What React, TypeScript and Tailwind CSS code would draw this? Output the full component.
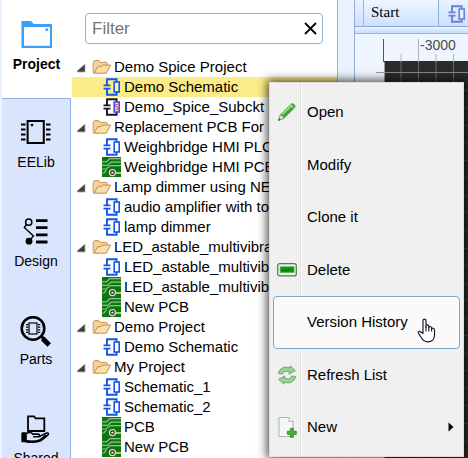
import React from "react";

type Kind = "folder" | "sch" | "sub" | "pcb";

const tree: { kind: Kind; label: string; active?: boolean }[] = [
  { kind: "folder", label: "Demo Spice Project" },
  { kind: "sch", label: "Demo Schematic", active: true },
  { kind: "sub", label: "Demo_Spice_Subckt" },
  { kind: "folder", label: "Replacement PCB For" },
  { kind: "sch", label: "Weighbridge HMI PLC" },
  { kind: "pcb", label: "Weighbridge HMI PCB" },
  { kind: "folder", label: "Lamp dimmer using NE555" },
  { kind: "sch", label: "audio amplifier with tone" },
  { kind: "sch", label: "lamp dimmer" },
  { kind: "folder", label: "LED_astable_multivibrator" },
  { kind: "sch", label: "LED_astable_multivibrator" },
  { kind: "pcb", label: "LED_astable_multivibrator" },
  { kind: "pcb", label: "New PCB" },
  { kind: "folder", label: "Demo Project" },
  { kind: "sch", label: "Demo Schematic" },
  { kind: "folder", label: "My Project" },
  { kind: "sch", label: "Schematic_1" },
  { kind: "sch", label: "Schematic_2" },
  { kind: "pcb", label: "PCB" },
  { kind: "pcb", label: "New PCB" },
];

function SchIcon({ sub = false, color = "#1457e6" }: { sub?: boolean; color?: string }) {
  const main = sub ? "#161620" : color;
  return (
    <svg width="18" height="20" viewBox="0 0 18 20" fill="none" className="shrink-0">
      <path d="M4 8V2.2h9.6V5M4 12v5.8h9.6V15" stroke={main} strokeWidth="1.9" />
      <path d="M.5 8.3h7M.5 11.7h7" stroke={main} strokeWidth="1.7" />
      <rect x="11.2" y="5" width="5" height="10" fill={sub ? "#f9d5dc" : "#fff"} fillOpacity={sub ? 1 : 0.4} stroke={sub ? "#4a4ae8" : color} strokeWidth="1.6" />
      {sub && <path d="M15.2 7.4h-2.6v2.4h2.4v2.5h-2.6" stroke="#ee4a68" strokeWidth="1" />}
    </svg>
  );
}

function PcbIcon() {
  return (
    <svg width="19" height="20" viewBox="0 0 19 20" fill="none" className="shrink-0">
      <rect width="19" height="20" fill="#0c770e" />
      <path d="M0 4.8h4.5L8 1.6h11M0 8.4h5.5L9 5.2h10M0 12h4l4.5-3.4H19M0 16h2l2.5-3" stroke="#8cc48a" strokeWidth="1.2" />
      <path d="M12 16h7" stroke="#e6df9a" strokeWidth="1.5" />
      <circle cx="10.5" cy="15.6" r="3" fill="#111" stroke="#d9dcc0" strokeWidth="1.4" />
      <circle cx="10.5" cy="15.6" r="1.2" fill="#fff" />
    </svg>
  );
}

function FolderIcon() {
  return (
    <svg width="20" height="16" viewBox="0 0 20 16" className="shrink-0">
      <path d="M1.2 13.6V3.3L2.6 1.6h4.2l1.3 1.8h6.5l.8 1V8l-10 6z" fill="#f3d3a0" stroke="#c99257" />
      <path d="M2 14.2l3.6-6.4 3.6-.4 1.6-1.3h7.8L14.2 14.2z" fill="#fbdfa8" stroke="#c48c4d" strokeLinejoin="round" />
    </svg>
  );
}

function TreeRow({ kind, label, active }: { kind: Kind; label: string; active?: boolean }) {
  const folder = kind === "folder";
  return (
    <div className={`ml-px flex h-5 shrink-0 items-center whitespace-nowrap ${active ? "bg-[#fbec88]" : ""} ${folder ? "pl-[5px]" : "pl-[30px]"}`}>
      {folder && (
        <svg width="9" height="9" viewBox="0 0 9 9" className="mt-[2px] mr-[6px] shrink-0">
          <path d="M7.8.6V7.8H.6v-1z" fill="#3e3e3e" stroke="#6e6e6e" strokeWidth=".8" />
        </svg>
      )}
      <span className="flex w-[22px] shrink-0">
        {folder ? (
          <FolderIcon />
        ) : kind === "pcb" ? (
          <PcbIcon />
        ) : (
          <span className="ml-px"><SchIcon sub={kind === "sub"} /></span>
        )}
      </span>
      <span className="text-[15px] leading-5">{label}</span>
    </div>
  );
}

function ProjectIcon() {
  return (
    <svg width="32" height="30" viewBox="0 0 32 30">
      <path d="M.5 28V1H10l2.8 3H31v24z" fill="#3da0f8" />
      <path d="M3 7h26v18.8H3z" fill="#fff" />
      <rect x="24.5" y="8.5" width="2.4" height="2.4" fill="#3b91e5" />
    </svg>
  );
}

function ChipIcon() {
  return (
    <svg width="32" height="30" viewBox="0 0 32 30" fill="none" stroke="#000">
      <rect x="7.6" y="2" width="16.2" height="22" strokeWidth="2" />
      <path d="M1 5.5h4.5M1 10.5h4.5M1 15.5h4.5M1 20.5h4.5M26 5.5h4.5M26 10.5h4.5M26 15.5h4.5M26 20.5h4.5" strokeWidth="1.8" />
      <circle cx="12" cy="6" r="1.3" fill="#000" stroke="none" />
    </svg>
  );
}

function DesignIcon() {
  return (
    <svg width="32" height="30" viewBox="0 0 32 30" fill="none" stroke="#000">
      <circle cx="8.7" cy="4.2" r="3.1" strokeWidth="1.5" />
      <path d="M6.6 6.5l-2.3 3L13.5 18l-3 3.4" strokeWidth="1.4" />
      <circle cx="9" cy="23.2" r="3.4" fill="#000" stroke="none" />
      <path d="M16 2.6h11.5M16 9.6h11.5M16 16.9h11.5M16 24h11.5" strokeWidth="2.8" />
    </svg>
  );
}

function PartsIcon() {
  return (
    <svg width="32" height="32" viewBox="0 0 32 32" fill="none" stroke="#000">
      <circle cx="13" cy="12.4" r="11.3" strokeWidth="2.6" />
      <path d="M21 20l3 3" strokeWidth="3" />
      <path d="M22.7 22.4l6.5 6.5" strokeWidth="5" />
      <rect x="9" y="7" width="8" height="11" strokeWidth="1.2" />
      <path d="M6 8.6h2.3M6 11.2h2.3M6 13.8h2.3M6 16.4h2.3M18 8.6h2.3M18 11.2h2.3M18 13.8h2.3M18 16.4h2.3" strokeWidth="1.2" />
    </svg>
  );
}

function SharedIcon() {
  return (
    <svg width="32" height="30" viewBox="0 0 32 30" fill="none" stroke="#000">
      <path d="M8 16V1.3h6l1.5 2h8.8V16z" strokeWidth="1.8" />
      <path d="M1.9 17.8h4.4v9H1.9z" fill="#000" strokeWidth="1" />
      <path d="M6 18.8c3-2 5-1.8 7 .3h5c2 0 2 2.7 0 2.7h-5 6l7.5-3.7c2.2-.5 2.5 1 1 2.4l-6.5 5c-4 2-9 1.6-15 .3z" strokeWidth="1.6" fill="#d9e4fd" />
      <path d="M6 26.2c6 1.2 10 .8 14.5-1.2l6-4.8" strokeWidth="2.4" />
    </svg>
  );
}

const sidebar: { label: string; icon: React.ReactNode }[] = [
  { label: "EELib", icon: <ChipIcon /> },
  { label: "Design", icon: <DesignIcon /> },
  { label: "Parts", icon: <PartsIcon /> },
  { label: "Shared", icon: <SharedIcon /> },
];

function Pencil() {
  return (
    <svg width="20" height="20" viewBox="0 0 20 20">
      <path d="M1.5 18.5l2-6L14 2.2c2-1.4 5 1 3.7 3.4L7.3 16z" fill="#3fa535" stroke="#4b9a48" strokeWidth=".8" />
      <path d="M5 12.5L15 3" stroke="#8ddb7d" strokeWidth="2.2" />
      <path d="M1.5 18.5l2-6 3.8 3.5z" fill="#dbe7ca" stroke="#76946b" strokeWidth=".7" />
      <path d="M1.3 18.7l.8-2.4 1.4 1.4z" fill="#2c632c" />
      <path d="M13.6 3l3.2 3.3" stroke="#ccedc3" strokeWidth=".9" />
    </svg>
  );
}

function DeleteIcon() {
  return (
    <svg width="20" height="14" viewBox="0 0 20 14">
      <rect x=".7" y=".7" width="18.6" height="12.2" rx="2" fill="#e6f1e3" stroke="#4c7e4e" strokeWidth="1.2" />
      <rect x="3.2" y="3.8" width="13.8" height="5.6" fill="#119313" stroke="#55a74f" strokeWidth=".7" />
      <path d="M4 7.3h8V5" stroke="#087308" fill="none" />
    </svg>
  );
}

function RefreshIcon() {
  return (
    <svg width="20" height="20" viewBox="0 0 20 20" strokeLinejoin="round" fill="#9bd394" stroke="#67a568">
      <path d="M1.5 8.5C2.5 2.8 8 1 12.6 3L13.3.9l5 4.8-6.4 3.4.6-2.4C8.8 5.6 6.6 6 5.4 9z" />
      <path d="M18.5 11.5C17.5 17.2 12 19 7.4 17l-.7 2.1-5-4.8 6.4-3.4-.6 2.4c3.7 1.1 5.9.7 7.1-2.3z" />
    </svg>
  );
}

function NewIcon() {
  return (
    <svg width="20" height="22" viewBox="0 0 20 22">
      <path d="M2 1.5h10l4 4v15H2z" fill="#f2f7fa" stroke="#a5b4bd" />
      <path d="M12 1.5v4h4" fill="#fff" stroke="#a5b4bd" />
      <path d="M13.3 12.3h3v3h3v3h-3v3h-3v-3h-3v-3h3z" fill="#45b52d" stroke="#278827" strokeWidth=".8" />
    </svg>
  );
}

const menu: { label: string; icon?: React.ReactNode; hover?: boolean; more?: boolean }[] = [
  { label: "Open", icon: <Pencil /> },
  { label: "Modify" },
  { label: "Clone it" },
  { label: "Delete", icon: <DeleteIcon /> },
  { label: "Version History", hover: true },
  { label: "Refresh List", icon: <RefreshIcon /> },
  { label: "New", icon: <NewIcon />, more: true },
];

function ContextMenu() {
  return (
    <div className="absolute top-[82px] left-[269px] h-[375px] w-[195px] border border-[#ddd] bg-[#f0f0f0] p-[3px] shadow-[0_0_9px_2px_rgba(0,0,0,0.7)]">
      <div className="absolute top-0 bottom-0 left-[30px] w-[2px] border-l border-[#e0e0e0] bg-white" />
      <div className="relative flex flex-col">
        {menu.map((m) => (
          <div
            key={m.label}
            className={`flex h-[52.5px] items-center rounded-[4px] border ${m.hover ? "border-[#79a9d1] bg-[#fafafa]" : "border-transparent"}`}
          >
            <span className="flex w-[33px] shrink-0 items-center pl-[3px]">{m.icon}</span>
            <span className="flex-1 text-[15px] leading-5 whitespace-nowrap">{m.label}</span>
            {m.more && (
              <svg width="6" height="10" viewBox="0 0 6 10" className="mr-[5px]">
                <path d="M.5.5L5.5 5l-5 4.5z" fill="#000" />
              </svg>
            )}
          </div>
        ))}
      </div>
      <svg width="20" height="26" viewBox="0 0 20 26" className="absolute top-[235px] left-[147px]">
        <path
          d="M6 15.5V3c0-2.4 3-2.4 3 0v6.5-1.2c0-2 2.8-1.8 2.8.2v1.2c.1-1.8 2.8-1.5 2.8.3v1.2c.3-1.6 2.9-1.2 2.9.7V17c0 4.2-2.7 6.8-6.7 6.8-3.3 0-5-1.6-6.6-4.3l-2.7-4.2c-.9-1.6 1-2.6 2.3-1.3z"
          fill="#fff" stroke="#1b1b2a" strokeWidth="1.2" strokeLinejoin="round"
        />
        <path d="M9 8.5v5M11.8 9v4.5M14.6 10v3.5" stroke="#1b1b2a" strokeWidth="1.1" />
      </svg>
    </div>
  );
}

function Editor() {
  const columns = [46, 63.5, 81, 98.5];
  const rows = Array.from({ length: 23 }, (_, i) => 38.5 + i * 17.55);
  return (
    <div className="flex min-w-0 flex-1 flex-col border-l border-[#95a9da] bg-[#eff5ff]">
      <div className="flex h-[27px] shrink-0 border-b border-[#8ba9d6] bg-linear-to-b from-[#e9f2ff] to-[#cce1ff]">
        <div className="w-[9px] shrink-0 border-r border-[#9bb5dc]" />
        <div className="w-[75px] shrink-0 border-r border-[#8fafe0] bg-linear-to-b from-[#eff6ff] to-[#cbe1ff] pl-[7px] font-['Liberation_Serif',serif] text-[15px] leading-6">Start</div>
        <div className="flex w-[50px] shrink-0 items-center pt-px pl-[9px]"><SchIcon color="#6684d4" /></div>
      </div>
      <div className="h-[7px] shrink-0 border-b border-[#9aafd9] bg-linear-to-b from-[#edf5ff] to-[#c4dcff]" />
      <svg width="113" height="424" viewBox="0 0 113 424" className="shrink-0">
        <rect x="29" y="27" width="84" height="397" fill="#2b2b2b" />
        {columns.map((x, i) => (
          <path key={x} d={`M${x} ${i === 1 ? 5 : 20}V28`} stroke="#b0b2b6" />
        ))}
        {columns.map((x) => (
          <path key={x} d={`M${x} 28V424`} stroke="#66696b" />
        ))}
        {rows.map((y, i) => (
          <path key={y} d={`M29 ${Math.floor(y) + 0.5}H113`} stroke={i === 0 ? "#858789" : "#4a4a4a"} />
        ))}
        <path d="M21 38.5h9M29.5 28v396" stroke="#999" />
        <path d="M28.5 5v23" stroke="#0769c8" />
        <text x="65" y="16" fill="#4b4b4b" className="font-['Liberation_Sans',sans-serif] text-[14px]">-3000</text>
      </svg>
    </div>
  );
}

export default function App() {
  return (
    <div className="relative flex h-[458px] w-[468px] overflow-hidden bg-[#eaf3ff] font-['Liberation_Sans',Arial,sans-serif] text-black">
      <div className="ml-[2px] flex w-[69px] shrink-0 flex-col">
        <div className="flex h-[98px] shrink-0 flex-col items-center bg-white pt-5 text-[14px] font-bold">
          <ProjectIcon />
          <span className="mt-[4px] leading-5">Project</span>
        </div>
        <div className="flex flex-1 flex-col border-t border-r border-[#8fb2e3] bg-[#d9e4fd]">
          {sidebar.map((s) => (
            <div key={s.label} className="flex h-[98.5px] shrink-0 flex-col items-center pt-5 text-[14px]">
              <div className="flex h-8 items-start">{s.icon}</div>
              <span className="mt-px leading-5">{s.label}</span>
            </div>
          ))}
        </div>
      </div>
      <div className="flex w-[267px] shrink-0 flex-col overflow-hidden border-r border-[#94b7e4] bg-white">
        <div className="mt-[13px] ml-[14px] flex h-[31px] w-[238px] shrink-0 items-center justify-between rounded-[4px] border border-[#91b4da] px-[6px]">
          <span className="text-[17px] leading-6 text-[#757575]">Filter</span>
          <svg width="13" height="13" viewBox="0 0 13 13" className="-mr-px">
            <path d="M1 1l11 11M12 1L1 12" stroke="#000" strokeWidth="1.8" />
          </svg>
        </div>
        <div className="mt-[13px] flex flex-col">
          {tree.map((t, i) => <TreeRow key={i} {...t} />)}
        </div>
      </div>
      <div className="w-4 shrink-0" />
      <Editor />
      <ContextMenu />
    </div>
  );
}
